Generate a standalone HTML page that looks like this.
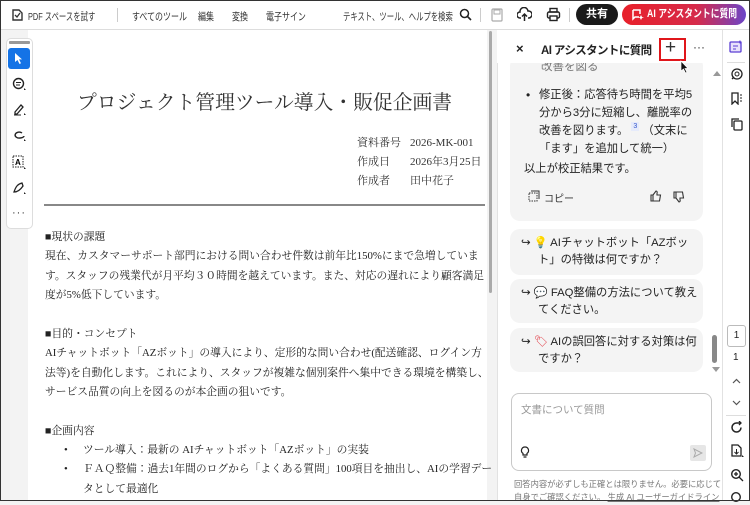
<!DOCTYPE html>
<html><head><meta charset="utf-8">
<style>
*{margin:0;padding:0;box-sizing:border-box}
body{width:750px;height:501px;overflow:hidden;background:#f3f3f3;font-family:"Liberation Sans","Noto Sans CJK JP",sans-serif;color:#222;position:relative}
.a{position:absolute;white-space:nowrap}
.c{transform:scaleX(.76);transform-origin:left center}
.frame{position:absolute;left:0;top:0;width:750px;height:501px;border:1px solid #333;pointer-events:none;z-index:9}
#top{position:absolute;left:0;top:0;width:750px;height:30px;background:#fff;border-bottom:1px solid #ddd;font-size:10.5px;color:#333}
.doc{font-family:"Liberation Serif","Noto Serif CJK JP",serif;color:#222}
.card{position:absolute;left:510px;width:193px;background:#f4f4f4;border-radius:10px}
.sug{font-size:11.3px;color:#222;line-height:17px}
</style></head><body>
<div id="top">
  <svg class="a" style="left:10px;top:8px" width="14" height="14" viewBox="0 0 14 14"><path d="M3 2h6l3 3v7H3z" fill="none" stroke="#333" stroke-width="1.4"/><path d="M5 7l2 2 3-4" fill="none" stroke="#333" stroke-width="1.3"/></svg>
  <div class="a c" style="left:28px;top:9px;transform:scaleX(.7)">PDF スペースを試す</div>
  <div class="a" style="left:117px;top:8px;width:1px;height:14px;background:#ccc"></div>
  <div class="a c" style="left:132px;top:9px">すべてのツール</div>
  <div class="a c" style="left:198px;top:9px">編集</div>
  <div class="a c" style="left:232px;top:9px">変換</div>
  <div class="a c" style="left:266px;top:9px">電子サイン</div>
  <div class="a c" style="left:343px;top:9px;transform:scaleX(.7)">テキスト、ツール、ヘルプを検索</div>
  <svg class="a" style="left:459px;top:8px" width="13" height="13" viewBox="0 0 13 13"><circle cx="5.5" cy="5.5" r="4" fill="none" stroke="#222" stroke-width="1.5"/><path d="M8.5 8.5l3.5 3.5" stroke="#222" stroke-width="1.6"/></svg>
  <div class="a" style="left:480px;top:8px;width:1px;height:14px;background:#ccc"></div>
  <svg class="a" style="left:491px;top:8px" width="12" height="14" viewBox="0 0 12 14"><rect x="1" y="1" width="10" height="12" rx="1" fill="none" stroke="#aaa" stroke-width="1.2"/><rect x="3" y="2" width="6" height="4" fill="none" stroke="#aaa"/></svg>
  <svg class="a" style="left:517px;top:7px" width="15" height="15" viewBox="0 0 15 15"><path d="M4 11H3a3 3 0 010-6 4 4 0 018-1 3 3 0 011 7h-1" fill="none" stroke="#222" stroke-width="1.5"/><path d="M7.5 14V7M5 9.5l2.5-2.5 2.5 2.5" fill="none" stroke="#222" stroke-width="1.5"/></svg>
  <svg class="a" style="left:546px;top:7px" width="15" height="15" viewBox="0 0 15 15"><rect x="4" y="1.5" width="7" height="3.5" fill="none" stroke="#222" stroke-width="1.4"/><rect x="1.5" y="5" width="12" height="6" rx="1.5" fill="none" stroke="#222" stroke-width="1.4"/><rect x="4" y="9" width="7" height="4.5" fill="#fff" stroke="#222" stroke-width="1.4"/></svg>
  <div class="a" style="left:569px;top:8px;width:1px;height:14px;background:#ccc"></div>
  <div class="a" style="left:576px;top:4px;width:42px;height:21px;border-radius:11px;background:#1a1a1a;color:#fff;font-weight:bold;font-size:11px;text-align:center;line-height:21px">共有</div>
  <div class="a" style="left:622px;top:4px;width:124px;height:21px;border-radius:11px;background:linear-gradient(90deg,#e8202a,#d62b4a 60%,#6b45c8)"></div>
  <div class="a c" style="left:647px;top:4px;color:#fff;font-weight:bold;font-size:11px;line-height:21px;transform:scaleX(.8)">AI アシスタントに質問</div>
  <svg class="a" style="left:631px;top:8px" width="13" height="13" viewBox="0 0 13 13"><path d="M2 2h7v4M2 2v9l2-2h4" fill="none" stroke="#fff" stroke-width="1.5"/><path d="M10 7l1 2 2 .5-2 .5-1 2-1-2-2-.5 2-.5z" fill="#fff"/></svg>
</div>

<div class="a" style="left:0;top:30px;width:497px;height:471px;background:#f3f3f3"></div>
<div class="a" style="left:28px;top:30px;width:459px;height:471px;background:#fff"></div>
<div class="a" style="left:489px;top:31px;width:3px;height:262px;background:#aaa;border-radius:2px"></div>
<div class="a" style="left:499px;top:255px;width:3px;height:28px;background:#aaa;border-radius:2px"></div>

<div class="a" style="left:6px;top:38px;width:27px;height:191px;background:#fff;border:1px solid #ddd;border-radius:5px"></div>
<div class="a" style="left:9px;top:41px;width:21px;height:3px;background:#999;border-radius:1px"></div>
<div class="a" style="left:8px;top:48px;width:22px;height:21px;background:#1473e6;border-radius:3px"></div>
<svg class="a" style="left:13px;top:52px" width="12" height="13" viewBox="0 0 12 13"><path d="M2 1v9l2.5-2 2 4 1.5-.8-2-3.8H9z" fill="#fff"/></svg>
<svg class="a" style="left:12px;top:77px" width="14" height="14" viewBox="0 0 14 14"><circle cx="6.5" cy="6.5" r="5" fill="none" stroke="#222" stroke-width="1.4"/><path d="M4 5.5h5M4 8h4" stroke="#222"/><path d="M12 11l2 2h-2z" fill="#222"/></svg>
<svg class="a" style="left:12px;top:102px" width="14" height="14" viewBox="0 0 14 14"><path d="M3 10l6-7 2 2-6 7H3z" fill="none" stroke="#222" stroke-width="1.3"/><path d="M2 13h7" stroke="#222"/><path d="M12 11l2 2h-2z" fill="#222"/></svg>
<svg class="a" style="left:12px;top:128px" width="14" height="14" viewBox="0 0 14 14"><path d="M10 5a4 3 0 10-2 5c2 0 4-1 4-2" fill="none" stroke="#222" stroke-width="1.4"/><path d="M12 11l2 2h-2z" fill="#222"/></svg>
<svg class="a" style="left:12px;top:155px" width="14" height="15" viewBox="0 0 14 15"><rect x="1" y="1" width="10" height="11" fill="none" stroke="#222" stroke-dasharray="1.5 1"/><text x="3" y="10" font-size="8" font-weight="bold" font-family="Liberation Sans">A</text><path d="M12 12l2 2h-2z" fill="#222"/></svg>
<svg class="a" style="left:12px;top:181px" width="14" height="14" viewBox="0 0 14 14"><path d="M2 11c2-6 4-8 8-9l1 3c-2 3-5 6-9 6z" fill="none" stroke="#222" stroke-width="1.3"/><path d="M12 11l2 2h-2z" fill="#222"/></svg>
<div class="a" style="left:12px;top:207px;font-size:11px;color:#333;letter-spacing:1px">···</div>

<div class="doc">
  <div class="a" style="left:77px;top:86px;font-size:19.8px;color:#333">プロジェクト管理ツール導入・販促企画書</div>
  <div class="a" style="left:357px;top:134px;font-size:11px;line-height:19px;color:#333">資料番号<br>作成日<br>作成者</div>
  <div class="a" style="left:410px;top:134px;font-size:11px;line-height:19px;color:#333">2026-MK-001<br>2026年3月25日<br>田中花子</div>
  <div class="a" style="left:44px;top:204px;width:441px;height:2px;background:#888"></div>
  <div class="a" style="left:45px;top:228px;font-size:10.75px;line-height:19.4px">■現状の課題<br>現在、カスタマーサポート部門における問い合わせ件数は前年比150%にまで急増していま<br>す。スタッフの残業代が月平均３０時間を越えています。また、対応の遅れにより顧客満足<br>度が5%低下しています。<br><br>■目的・コンセプト<br>AIチャットボット「AZボット」の導入により、定形的な問い合わせ(配送確認、ログイン方<br>法等)を自動化します。これにより、スタッフが複雑な個別案件へ集中できる環境を構築し、<br>サービス品質の向上を図るのが本企画の狙いです。<br><br>■企画内容</div>
  <div class="a" style="left:64px;top:441px;font-size:10.75px;line-height:19.4px">•<br>•</div>
  <div class="a" style="left:83px;top:441px;font-size:10.75px;line-height:19.4px">ツール導入：最新の AIチャットボット「AZボット」の実装<br>ＦＡＱ整備：過去1年間のログから「よくある質問」100項目を抽出し、AIの学習デー<br>タとして最適化</div>
</div>

<div class="a" style="left:497px;top:30px;width:225px;height:471px;background:#fff;border-left:1px solid #e2e2e2"></div>
<div class="card" style="top:56px;height:165px"></div>
<div class="a" style="left:541px;top:58px;font-size:11.5px;color:#777">改善を図る</div>
<div class="a" style="left:497px;top:30px;width:225px;height:33px;background:#fff"></div>
<div class="a" style="left:516px;top:41px;font-size:13px;font-weight:bold">×</div>
<div class="a" style="left:541px;top:42px;font-size:11.5px;font-weight:bold;letter-spacing:-0.6px">AI アシスタントに質問</div>
<div class="a" style="left:659px;top:38px;width:27px;height:23px;border:2px solid #e0161b"></div>
<div class="a" style="left:665px;top:37px;font-size:19px;font-weight:300;color:#333">+</div>
<div class="a" style="left:693px;top:40px;font-size:12px;color:#333">···</div>
<svg class="a" style="left:680px;top:60px" width="10" height="14" viewBox="0 0 10 14"><path d="M1 1v10l2.5-2 2 4 1.5-.7-2-3.8H8z" fill="#111" stroke="#fff" stroke-width=".7"/></svg>
<div class="a" style="left:713px;top:71px;width:0;height:0;border:4px solid transparent;border-bottom:5px solid #999;border-top:0"></div>
<div class="a" style="left:526px;top:86px;font-size:12px;line-height:18px">•</div>
<div class="a sug" style="left:539px;top:86px;line-height:18px">修正後：応答待ち時間を平均5<br>分から3分に短縮し、離脱率の<br>改善を図ります。 <span style="display:inline-block;background:#e6ebfb;color:#3355cc;font-size:7px;line-height:9px;padding:0 2px;vertical-align:top">3</span> （文末に<br>「ます」を追加して統一）</div>
<div class="a sug" style="left:524px;top:161px">以上が校正結果です。</div>
<svg class="a" style="left:528px;top:190px" width="12" height="12" viewBox="0 0 12 12"><rect x="1" y="3" width="8" height="8" fill="none" stroke="#333" stroke-dasharray="1.5 1"/><path d="M3 1h8v8" fill="none" stroke="#333"/></svg>
<div class="a" style="left:544px;top:190px;font-size:10px;color:#333">コピー</div>
<svg class="a" style="left:650px;top:190px" width="12" height="12" viewBox="0 0 12 12"><path d="M1 5h2v6H1zM3 5l3-4c1 0 1.5 1 1 2.5L7 5h3.5l-1 6H3" fill="none" stroke="#333" stroke-width="1.1"/></svg>
<svg class="a" style="left:673px;top:191px" width="12" height="12" viewBox="0 0 12 12"><path d="M1 1h2v6H1zM3 7l3 4c1 0 1.5-1 1-2.5L7 7h3.5l-1-6H3" fill="none" stroke="#333" stroke-width="1.1"/></svg>

<div class="card" style="top:229px;height:46px"></div>
<div class="a sug" style="left:521px;top:235px">↪ 💡 AIチャットボット「AZボッ<br><span style="padding-left:17px">ト」の特徴は何ですか？</span></div>
<div class="card" style="top:279px;height:44px"></div>
<div class="a sug" style="left:521px;top:285px">↪ <span style="color:#b9a6e6">💬</span> FAQ整備の方法について教え<br><span style="padding-left:17px">てください。</span></div>
<div class="card" style="top:328px;height:44px"></div>
<div class="a sug" style="left:521px;top:334px">↪ <span style="color:#e0303a">🏷</span> AIの誤回答に対する対策は何<br><span style="padding-left:17px">ですか？</span></div>
<div class="a" style="left:712px;top:335px;width:5px;height:28px;background:#888;border-radius:3px"></div>
<div class="a" style="left:712px;top:367px;width:0;height:0;border:4px solid transparent;border-top:5px solid #999;border-bottom:0"></div>

<div class="a" style="left:511px;top:393px;width:201px;height:78px;border:1px solid #c8c8c8;border-radius:8px;background:#fff"></div>
<div class="a" style="left:521px;top:402px;font-size:10.5px;color:#999">文書について質問</div>
<svg class="a" style="left:519px;top:445px" width="12" height="13" viewBox="0 0 12 13"><path d="M6 2a3.5 3.5 0 00-2 6.4V10h4V8.4A3.5 3.5 0 006 2zM4.5 12h3" fill="none" stroke="#222" stroke-width="1.2"/></svg>
<div class="a" style="left:690px;top:445px;width:16px;height:16px;background:#e6e6e6;border-radius:2px"></div>
<svg class="a" style="left:693px;top:448px" width="10" height="10" viewBox="0 0 10 10"><path d="M1 1l8 4-8 4 1.5-4z" fill="none" stroke="#aaa"/></svg>
<div class="a" style="left:514px;top:478px;font-size:8.3px;color:#777;line-height:13px">回答内容が必ずしも正確とは限りません。必要に応じてご<br>自身でご確認ください。 <u>生成 AI ユーザーガイドライン</u></div>

<div class="a" style="left:722px;top:30px;width:28px;height:471px;background:#fff;border-left:1px solid #e2e2e2"></div>
<svg class="a" style="left:729px;top:40px" width="14" height="14" viewBox="0 0 14 14"><rect x="1" y="2" width="11" height="10" rx="1" fill="#e8e2fb" stroke="#5b3fd4" stroke-width="1.3"/><path d="M4 6h5M4 9h3" stroke="#5b3fd4"/><path d="M11 0l.8 1.5 1.5.5-1.5.5L11 4l-.8-1.5L8.7 2l1.5-.5z" fill="#5b3fd4"/></svg>
<div class="a" style="left:727px;top:62px;width:18px;height:1px;background:#ddd"></div>
<svg class="a" style="left:730px;top:68px" width="13" height="13" viewBox="0 0 13 13"><circle cx="7" cy="6" r="5" fill="none" stroke="#222" stroke-width="1.3"/><circle cx="7" cy="6" r="2" fill="none" stroke="#222"/><path d="M2 11l2-2" stroke="#222" stroke-width="1.3"/></svg>
<svg class="a" style="left:730px;top:92px" width="13" height="13" viewBox="0 0 13 13"><path d="M2 1h6v11l-3-3-3 3z" fill="none" stroke="#222" stroke-width="1.3"/><path d="M10 3h2M10 6h2M10 9h2" stroke="#222"/></svg>
<svg class="a" style="left:730px;top:117px" width="13" height="14" viewBox="0 0 13 14"><rect x="4" y="4" width="8" height="9" rx="1" fill="none" stroke="#222" stroke-width="1.3"/><path d="M2 10V2h7" fill="none" stroke="#222" stroke-width="1.3"/></svg>
<div class="a" style="left:727px;top:325px;width:19px;height:22px;border:1px solid #bbb;border-radius:3px;font-size:10px;text-align:center;line-height:20px">1</div>
<div class="a" style="left:733px;top:352px;font-size:10px">1</div>
<svg class="a" style="left:732px;top:378px" width="9" height="6" viewBox="0 0 9 6"><path d="M1 5l3.5-3.5L8 5" fill="none" stroke="#555" stroke-width="1.2"/></svg>
<svg class="a" style="left:732px;top:400px" width="9" height="6" viewBox="0 0 9 6"><path d="M1 1l3.5 3.5L8 1" fill="none" stroke="#555" stroke-width="1.2"/></svg>
<div class="a" style="left:726px;top:415px;width:20px;height:1px;background:#ddd"></div>
<svg class="a" style="left:730px;top:421px" width="13" height="13" viewBox="0 0 13 13"><path d="M11 6.5A4.5 4.5 0 116.5 2H10" fill="none" stroke="#222" stroke-width="1.5"/><path d="M9 0l2 2-2 2" fill="none" stroke="#222" stroke-width="1.3"/></svg>
<svg class="a" style="left:730px;top:444px" width="14" height="14" viewBox="0 0 14 14"><path d="M2 1h6l3 3v8H2z" fill="none" stroke="#222" stroke-width="1.3"/><path d="M6.5 5v5M4.5 8l2 2 2-2" fill="none" stroke="#222"/><path d="M12 11l2 2h-2z" fill="#222"/></svg>
<svg class="a" style="left:730px;top:468px" width="14" height="14" viewBox="0 0 14 14"><circle cx="6" cy="6" r="4.3" fill="none" stroke="#222" stroke-width="1.4"/><path d="M9 9l4 4M4 6h4M6 4v4" stroke="#222" stroke-width="1.3"/></svg>
<svg class="a" style="left:730px;top:491px" width="14" height="14" viewBox="0 0 14 14"><circle cx="6" cy="6" r="4.3" fill="none" stroke="#222" stroke-width="1.4"/></svg>
<div class="frame"></div>
</body></html>
